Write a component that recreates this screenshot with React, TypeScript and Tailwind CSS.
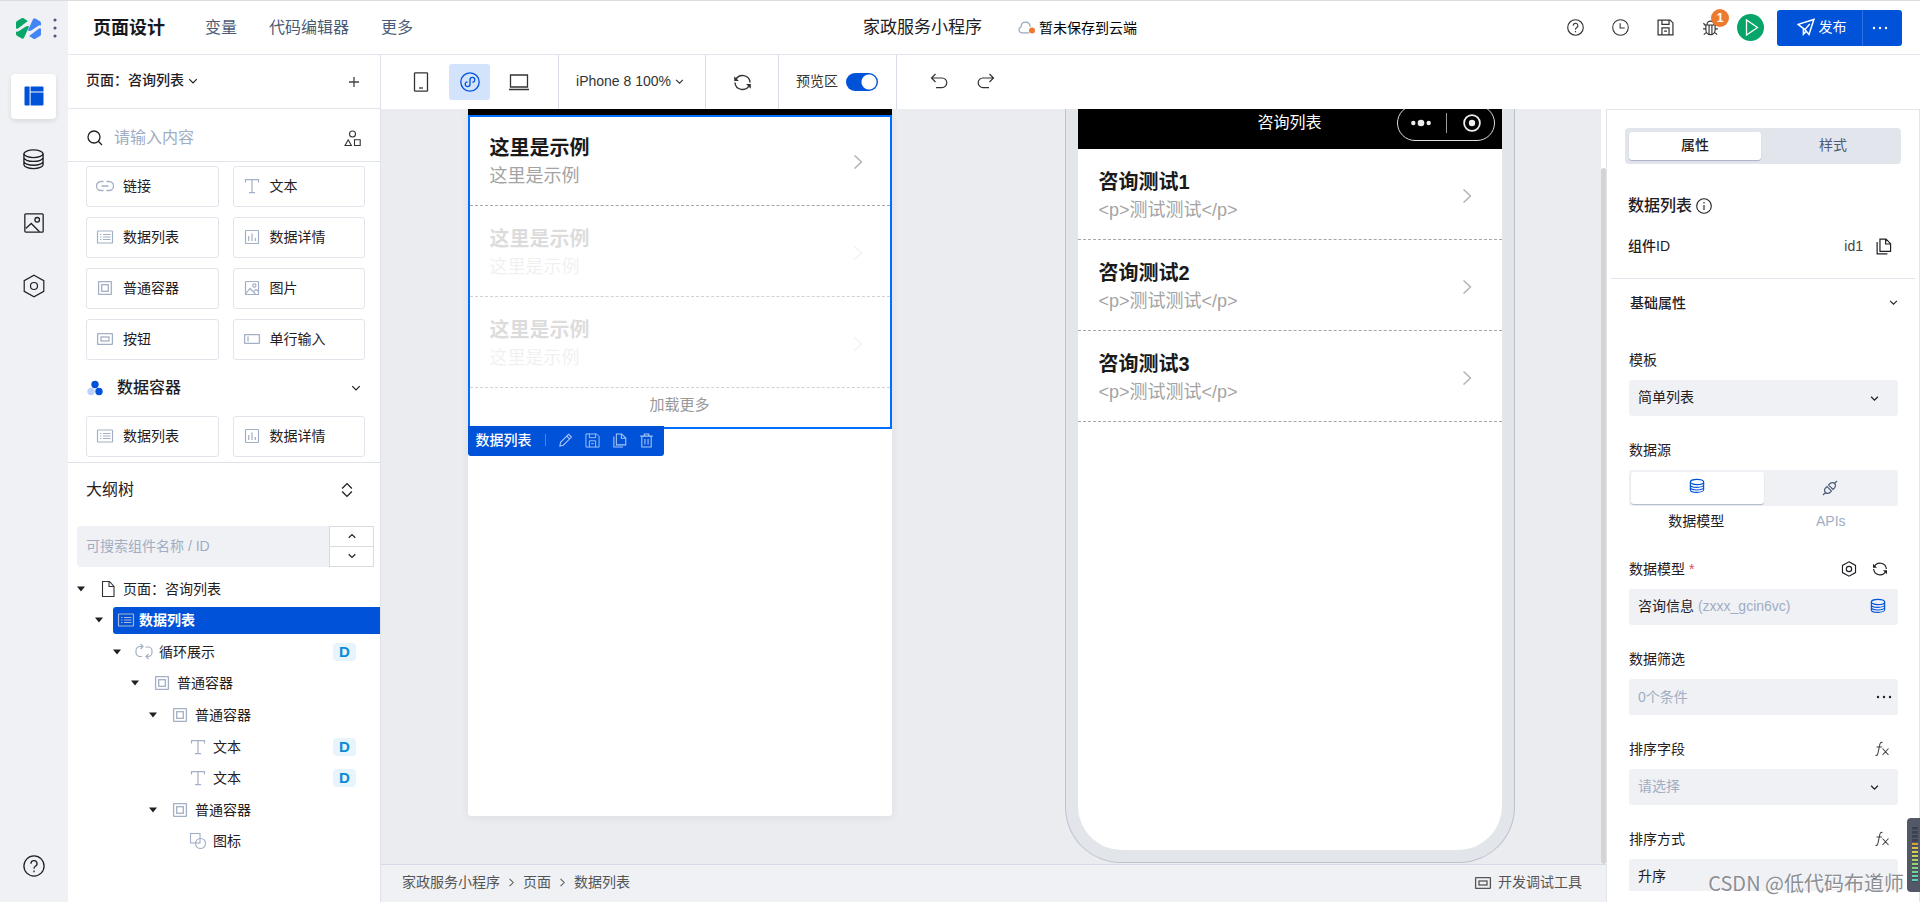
import React, { useState } from "react";

type IconProps = { className?: string };

function Svg({
  className,
  box = 24,
  sw = 1.5,
  children,
}: IconProps & { box?: number; sw?: number; children: React.ReactNode }) {
  return (
    <svg
      viewBox={`0 0 ${box} ${box}`}
      className={className}
      fill="none"
      stroke="currentColor"
      strokeWidth={sw}
      aria-hidden="true"
    >
      {children}
    </svg>
  );
}

const Logo = () => (
  <svg viewBox="0 0 76 64" className="h-[21px] w-[25px]" aria-hidden="true">
    <path fill="#07a568" d="M0 14Q0 11 3 9L17 1Q20-1 23 1L36 9L6 32Q0 35 0 30Z" />
    <path fill="#07a568" d="M0 41Q4 43 10 39L30 26Q36 23 40 26L24 61Q20 65 16 62L3 54Q0 52 0 49Z" />
    <path fill="#4285f4" d="M76 50Q76 53 73 55L59 63Q56 65 53 63L40 55L70 32Q76 29 76 34Z" />
    <path fill="#4285f4" d="M76 23Q72 21 66 25L46 38Q40 41 36 38L52 3Q56-1 60 2L73 10Q76 12 76 15Z" />
  </svg>
);

const LayoutIcon = ({ className }: IconProps) => (
  <svg viewBox="0 0 20 20" className={className} fill="#0052d9" aria-hidden="true">
    <path d="M1.500.5H5.600v19H1.500A1 1 0 0 1 .5 18.500v-17a1 1 0 0 1 1-1ZM6.600.5h11.900a1 1 0 0 1 1 1v4H6.600ZM6.600 6.500h12.900v12a1 1 0 0 1-1 1H6.600Z" />
  </svg>
);
const Database = ({ className, sw = 1.4 }: IconProps & { sw?: number }) => (
  <Svg className={className} sw={sw}>
    <ellipse cx="12" cy="6" rx="10" ry="4" />
    <path d="M2 6v11.500c0 2.200 4.400 4 10 4s10-1.800 10-4V6M2 10c0 2.200 4.400 4 10 4s10-1.800 10-4M2 14c0 2.200 4.400 4 10 4s10-1.800 10-4" />
  </Svg>
);
const Picture = ({ className, sw = 1.4 }: IconProps & { sw?: number }) => (
  <Svg className={className} sw={sw}>
    <rect x="2" y="2" width="20" height="20" rx="1" />
    <circle cx="15.500" cy="8.500" r="2.500" />
    <path d="M3 18 9 12.500l9 9" />
  </Svg>
);
const Hexagon = ({ className, sw = 1.4, r = 3.2 }: IconProps & { sw?: number; r?: number }) => (
  <Svg className={className} sw={sw}>
    <path d="M12 1.200 21.800 6.600v10.800L12 22.800 2.200 17.400V6.600Z" />
    <circle cx="12" cy="12" r={r} />
  </Svg>
);
const Help = ({ className, sw = 1.4 }: IconProps & { sw?: number }) => (
  <Svg className={className} sw={sw}>
    <circle cx="12" cy="12" r="11" />
    <path d="M8.700 9.600A3.300 3.300 0 1 1 13.500 12.300Q12 13.200 12 15M12 16.800v2" />
  </Svg>
);
const Clock = ({ className }: IconProps) => (
  <Svg className={className}>
    <circle cx="12" cy="12" r="11" />
    <path d="M11.500 6v6.800h6.500" />
  </Svg>
);
const Save = ({ className, sw = 1.5 }: IconProps & { sw?: number }) => (
  <Svg className={className} sw={sw}>
    <path d="M1.500 1.500h17l4 4v17h-21ZM7 1.500v6h10v-6M7 22.500v-10h10v10M10 17h4" />
  </Svg>
);
const Bug = ({ className }: IconProps) => (
  <Svg className={className} sw={1.6}>
    <path d="M7 8a5 5 0 0 1 10 0M5.500 8.500h13v7a6.500 6.500 0 0 1-13 0ZM10 9v12.500M14 9v12.500M5.500 9.500 2 6M18.500 9.500 22 6M5.500 14H1.500M18.500 14h4M6.500 18.500 2.500 22M17.500 18.500l4 3.500" />
  </Svg>
);
const Send = ({ className }: IconProps) => (
  <Svg className={className} sw={2}>
    <path d="M1.500 8.500 22.500 2 16 22 10.500 15.500ZM10.500 15.500 17 8M8.500 14v7.500l4-4" />
  </Svg>
);
const Chevron = ({ className, d = "M2 5l6 6 6-6", sw = 2 }: IconProps & { d?: string; sw?: number }) => (
  <Svg className={className} box={16} sw={sw}>
    <path d={d} />
  </Svg>
);
const Dots = ({ className }: IconProps) => (
  <svg viewBox="0 0 16 16" className={className} fill="currentColor" aria-hidden="true">
    <circle cx="2" cy="8" r="1.200" />
    <circle cx="8" cy="8" r="1.200" />
    <circle cx="14" cy="8" r="1.200" />
  </svg>
);
const Refresh = ({ className }: IconProps) => (
  <Svg className={className} sw={1.8}>
    <path d="M3.500 8.500A9.500 9.500 0 0 1 21.500 12M20.500 15.500A9.500 9.500 0 0 1 2.500 12" />
    <path fill="currentColor" stroke="none" d="M1.500 4v6h6ZM22.500 20v-6h-6Z" />
  </Svg>
);
const Copy = ({ className, sw = 1.7 }: IconProps & { sw?: number }) => (
  <Svg className={className} sw={sw}>
    <path d="M7 1.500h8.500L22 8v11H7ZM15 1.500V8.500h7M3 5.500v17h14.500" />
  </Svg>
);
const Pencil = ({ className }: IconProps) => (
  <Svg className={className} sw={1.7}>
    <path d="M3 21l1-6L17 2l4.500 4.500-13 13ZM14 5l4.500 4.500" />
  </Svg>
);
const Trash = ({ className }: IconProps) => (
  <Svg className={className} sw={1.7}>
    <path d="M2 5h20M8.500 5V1.500h7V5M4.500 5v17.500h15V5M9.500 9.500v9M14.500 9.500v9" />
  </Svg>
);
const LinkIcon = ({ className }: IconProps) => (
  <Svg className={className} box={18} sw={1.3}>
    <path d="M7.500 4.500H5a4.500 4.500 0 0 0 0 9h2.500M10.500 4.500H13a4.500 4.500 0 0 1 0 9h-2.500M5.500 9h7" />
  </Svg>
);
const TextIcon = ({ className }: IconProps) => (
  <Svg className={className} box={18} sw={1.2}>
    <path d="M2.500 5.500V2.700h13v2.800M9 2.700v12.800M6 15.600h6" />
  </Svg>
);
const ListIcon = ({ className }: IconProps) => (
  <Svg className={className} box={18} sw={1.2}>
    <rect x="1.500" y="3" width="15" height="12" rx=".6" />
    <path d="M4 6.500h1.500M7 6.500h7.500M4 9h1.500M7 9h7.500M4 11.500h1.500M7 11.500h7.500" />
  </Svg>
);
const DetailIcon = ({ className }: IconProps) => (
  <Svg className={className} box={18} sw={1.2}>
    <rect x="2.500" y="2.500" width="13" height="13" rx=".6" />
    <path d="M5.700 8v5M9 5.500V13M12.300 10v3" />
  </Svg>
);
const BoxIcon = ({ className }: IconProps) => (
  <Svg className={className} box={18} sw={1.3}>
    <rect x="2.600" y="2.600" width="12.800" height="12.800" rx=".4" />
    <rect x="5.700" y="5.700" width="6.600" height="6.600" />
  </Svg>
);
const PicIcon = ({ className }: IconProps) => (
  <Svg className={className} box={18} sw={1.2}>
    <rect x="2.500" y="2.500" width="13" height="13" rx=".6" />
    <circle cx="11.300" cy="6.500" r="1.600" />
    <path d="M3 14.500l4-5 5.500 5.500M11 12l2-1.500 2.500 2" />
  </Svg>
);
const ButtonIcon = ({ className }: IconProps) => (
  <Svg className={className} box={18} sw={1.3}>
    <rect x="1.600" y="3.600" width="14.800" height="10.800" rx=".5" />
    <rect x="5" y="7" width="8" height="4" />
  </Svg>
);
const InputIcon = ({ className }: IconProps) => (
  <Svg className={className} box={18} sw={1.3}>
    <rect x="1.600" y="4.600" width="14.800" height="8.800" rx=".5" />
    <path d="M5 6.500v5" />
  </Svg>
);
const PageIcon = ({ className }: IconProps) => (
  <Svg className={className} box={18} sw={1.1}>
    <path d="M3.500 1.500h7l4.500 5v10H3.500ZM10 1.500v5h5" />
  </Svg>
);
const LoopIcon = ({ className }: IconProps) => (
  <Svg className={className} box={18} sw={1.2}>
    <path d="M7.500 3.500H5a4 4 0 0 0-4 4v2a4 4 0 0 0 4 4h2M5.500 1l2.500 2.500L5.500 6M10.500 4H13a4 4 0 0 1 4 4v1.500a4 4 0 0 1-4 4h-2M13.500 11 11 13.500 13.500 16" />
  </Svg>
);
const ShapesIcon = ({ className }: IconProps) => (
  <Svg className={className} box={18} sw={1.1}>
    <rect x="1.500" y="1.500" width="9.500" height="9.500" />
    <circle cx="11.500" cy="11.500" r="5" />
  </Svg>
);
const MiniProgram = ({ className }: IconProps) => (
  <Svg className={className} box={20} sw={1.3}>
    <circle cx="10" cy="10" r="9.200" />
    <path d="M12.400 10.200A2.400 2.400 0 1 0 10 7.800V12.200A2.400 2.400 0 1 1 7.600 9.800" />
  </Svg>
);
const Fx = () => (
  <svg viewBox="0 0 16 16" className="h-4 w-4" fill="none" stroke="#444" strokeWidth="1.100" aria-hidden="true">
    <path d="M8.500 1.500C6.500.8 6 2.500 5.600 4.500L4 12c-.4 2-1 2.700-2.500 2.300M2.500 6h5.500M8.500 7.500l6 6.500M14.500 7.500l-6 6.500" />
  </svg>
);

const components = [
  { label: "链接", Icon: LinkIcon },
  { label: "文本", Icon: TextIcon },
  { label: "数据列表", Icon: ListIcon },
  { label: "数据详情", Icon: DetailIcon },
  { label: "普通容器", Icon: BoxIcon },
  { label: "图片", Icon: PicIcon },
  { label: "按钮", Icon: ButtonIcon },
  { label: "单行输入", Icon: InputIcon },
];

function ComponentGrid({ items }: { items: typeof components }) {
  return (
    <div className="grid grid-cols-2 gap-x-3.5 gap-y-2.5 pr-[15px] pl-[18px]">
      {items.map(({ label, Icon }) => (
        <button
          key={label}
          className="flex h-[41px] items-center gap-[9px] rounded-[3px] border border-[#e1e4ea] pb-0.5 pl-[9px] text-sm text-[#1f2024]"
        >
          <Icon className="h-[18px] w-[18px] text-[#a3afc4]" />
          {label}
        </button>
      ))}
    </div>
  );
}

const indents = ["pl-[9px]", "pl-[27px]", "pl-[45px]", "pl-[63px]", "pl-[81px]", "pl-[99px]"];
const tree = [
  { level: 0, label: "页面：咨询列表", Icon: PageIcon, open: true, tint: "text-[#333]" },
  { level: 1, label: "数据列表", Icon: ListIcon, open: true, selected: true },
  { level: 2, label: "循环展示", Icon: LoopIcon, open: true, bound: true },
  { level: 3, label: "普通容器", Icon: BoxIcon, open: true },
  { level: 4, label: "普通容器", Icon: BoxIcon, open: true },
  { level: 5, label: "文本", Icon: TextIcon, bound: true },
  { level: 5, label: "文本", Icon: TextIcon, bound: true },
  { level: 4, label: "普通容器", Icon: BoxIcon, open: true },
  { level: 5, label: "图标", Icon: ShapesIcon },
];

function Rail() {
  return (
    <nav className="flex w-[68px] shrink-0 flex-col bg-[#f0f1f5] text-[#1f2024]">
      <div className="flex h-[54px] w-full items-center gap-3 pl-4">
        <Logo />
        <svg viewBox="0 0 4 20" className="h-5 w-1" fill="#4b5b76" aria-hidden="true">
          <circle cx="2" cy="2" r="1.600" />
          <circle cx="2" cy="10" r="1.600" />
          <circle cx="2" cy="18" r="1.600" />
        </svg>
      </div>
      <div className="mt-[19px] ml-[11px] flex flex-col gap-[18px]">
        <button aria-label="布局" className="grid h-[45px] w-[45px] place-items-center rounded bg-white pb-0.5 shadow-[0_2px_5px_rgba(0,0,0,0.1)]">
          <LayoutIcon className="h-5 w-5" />
        </button>
        <button aria-label="数据" className="grid h-[45px] w-[45px] place-items-center">
          <Database className="h-[23px] w-[23px]" />
        </button>
        <button aria-label="素材" className="grid h-[45px] w-[45px] place-items-center">
          <Picture className="h-[22px] w-[22px]" />
        </button>
        <button aria-label="设置" className="grid h-[45px] w-[45px] place-items-center">
          <Hexagon className="h-6 w-6" sw={1.2} r={3.5} />
        </button>
      </div>
      <button aria-label="帮助" className="mt-auto mb-3.5 ml-[11px] grid h-[45px] w-[45px] place-items-center">
        <Help className="h-[22px] w-[22px]" />
      </button>
    </nav>
  );
}

function Header() {
  return (
    <header className="grid h-[54px] shrink-0 grid-cols-[1fr_auto_1fr] items-center border-b border-[#e4e6ed] bg-white">
      <div className="flex items-center gap-8 pl-[25px]">
        <h1 className="mr-2 text-lg font-bold text-[#16181d]">页面设计</h1>
        <a href="#variables" className="text-base text-[#4b5b76]">变量</a>
        <a href="#editor" className="text-base text-[#4b5b76]">代码编辑器</a>
        <a href="#more" className="text-base text-[#4b5b76]">更多</a>
      </div>
      <div className="flex items-center gap-9 pl-3">
        <span className="text-[17px] text-[#1f2024]">家政服务小程序</span>
        <span className="flex items-center gap-1 text-sm text-black">
          <svg viewBox="0 0 17 13" className="h-[13px] w-[17px]" fill="none" aria-hidden="true">
            <path
              d="M11 11.800H3.800A3 3 0 0 1 3 6c.2-3 2-4.900 4.500-4.900S12 3 12.300 6"
              stroke="#9aa8c2"
              strokeWidth="1.200"
            />
            <circle cx="14" cy="9.500" r="3" fill="#ed7b2f" />
          </svg>
          暂未保存到云端
        </span>
      </div>
      <div className="flex items-center justify-end pr-[18px] text-[#333]">
        <div className="flex items-center gap-7">
          <button aria-label="帮助"><Help className="h-[17px] w-[17px]" sw={1.6} /></button>
          <button aria-label="历史"><Clock className="h-[17px] w-[17px]" /></button>
          <button aria-label="保存"><Save className="h-[17px] w-[17px]" sw={1.7} /></button>
          <button aria-label="调试" className="relative">
            <Bug className="h-[17px] w-[17px]" />
            <span className="absolute -top-2.5 left-[9px] grid h-[18px] w-[18px] place-items-center rounded-full bg-[#ed7b2f] text-xs font-bold text-white">
              1
            </span>
          </button>
        </div>
        <button aria-label="运行" className="ml-[18px] grid h-[27px] w-[27px] place-items-center rounded-full bg-[#07a568] text-white">
          <svg viewBox="0 0 27 27" className="h-[27px] w-[27px]" fill="none" stroke="currentColor" strokeWidth="1.300" aria-hidden="true">
            <path d="M9.500 6v15l11-7.500Z" />
          </svg>
        </button>
        <div className="ml-[13px] flex h-9 overflow-hidden rounded-[3px] bg-[#0052d9] text-sm text-white">
          <button className="flex w-[86px] items-center justify-center gap-1 border-r border-[#2e70e0] pb-0.5 pl-1">
            <Send className="h-[18px] w-[18px]" />
            发布
          </button>
          <button aria-label="更多操作" className="grid w-[39px] place-items-center pr-1.5">
            <Dots className="h-4 w-4" />
          </button>
        </div>
      </div>
    </header>
  );
}

function LeftPanel() {
  return (
    <aside className="flex w-[313px] shrink-0 flex-col border-r border-[#dfe2e9] bg-white text-[#1f2024]">
      <div className="flex h-[54px] shrink-0 items-center justify-between border-b border-[#e4e6ed] pr-[18px] pl-[18px]">
        <button className="flex items-center gap-1 pb-1 text-sm font-medium">
          页面：咨询列表
          <Chevron className="mt-0.5 h-2.5 w-2.5" />
        </button>
        <button aria-label="新增页面">
          <Svg className="h-4 w-4 text-[#444]" box={16} sw={1.3}>
            <path d="M8 3v10M3 8h10" />
          </Svg>
        </button>
      </div>
      <div className="flex h-[53px] shrink-0 items-center gap-[11px] border-b border-[#e1e4ea] pt-1.5 pr-[19px] pl-[19px]">
        <Svg className="h-4 w-4" box={16} sw={1.3}>
          <circle cx="7" cy="7" r="6" />
          <path d="M11.300 11.300 15 15" />
        </Svg>
        <input
          aria-label="搜索组件"
          placeholder="请输入内容"
          className="min-w-0 flex-1 bg-transparent text-base outline-none placeholder:text-[#a0adc3]"
        />
        <button aria-label="组件分类">
          <Svg className="h-[17px] w-[17px] text-[#333]" box={17} sw={1.1}>
            <circle cx="8.500" cy="4" r="3" />
            <path d="M1 15.500 4.200 9.800 7.400 15.500ZM10.500 9.800h5.700v5.700h-5.700Z" />
          </Svg>
        </button>
      </div>
      <div className="shrink-0 border-b border-[#dfe2e9] pt-1 pb-[5px]">
        <ComponentGrid items={components} />
        <button className="flex h-14 w-full items-center pr-[19px] pl-[19px] text-base font-medium">
          <svg viewBox="0 0 16 16" className="mr-3.5 h-4 w-4" aria-hidden="true">
            <circle cx="8" cy="4.500" r="3.700" fill="#0052d9" />
            <circle cx="4" cy="11.500" r="3.700" fill="#bbd3fb" />
            <circle cx="12" cy="11.500" r="3.700" fill="#0052d9" />
          </svg>
          数据容器
          <Chevron className="ml-auto h-2.5 w-2.5" />
        </button>
        <ComponentGrid items={components.slice(2, 4)} />
      </div>
      <div className="flex h-[63px] shrink-0 items-center justify-between pr-[27px] pb-2.5 pl-[18px]">
        <h2 className="text-base">大纲树</h2>
        <button aria-label="展开或收起">
          <Svg className="h-4 w-3" box={16} sw={1.8}>
            <path d="M1.500 6 8-.5 14.500 6M1.500 10 8 16.500 14.500 10" />
          </Svg>
        </button>
      </div>
      <div className="flex h-[41px] shrink-0 pr-[6px] pl-[9px]">
        <input
          aria-label="搜索大纲树"
          placeholder="可搜索组件名称 / ID"
          className="min-w-0 flex-1 rounded-l bg-[#f0f1f5] px-[9px] pb-0.5 text-sm outline-none placeholder:text-[#a0adc3]"
        />
        <div className="grid w-[45px] grid-rows-2 border border-[#d9dbe0]">
          <button aria-label="上一个" className="grid place-items-center border-b border-[#d9dbe0]">
            <Chevron className="h-2 w-2" d="M1.500 11.500 8 5l6.500 6.500" sw={2.4} />
          </button>
          <button aria-label="下一个" className="grid place-items-center">
            <Chevron className="h-2 w-2" d="M1.500 4.500 8 11l6.500-6.500" sw={2.4} />
          </button>
        </div>
      </div>
      <ul className="mt-1.5 grid h-[284px] shrink-0 auto-rows-fr">
        {tree.map(({ level, label, Icon, open, selected, bound, tint }, i) => (
          <li key={i} className={`flex items-center text-sm ${indents[level]}`}>
            <span className="flex w-[18px] shrink-0">
              {open && (
                <svg viewBox="0 0 8 6" className="h-1.5 w-2" fill="#1f2024" aria-hidden="true">
                  <path d="M0 .5h8L4 5.500Z" />
                </svg>
              )}
            </span>
            <button
              className={`flex h-[27px] min-w-0 flex-1 items-center rounded-l-[3px] pl-1 ${
                selected ? "gap-1 bg-[#0052d9] font-bold text-white" : "gap-1.5"
              }`}
            >
              <Icon className={`h-[18px] w-[18px] ${selected ? "text-[#a9b8d3]" : tint ?? "text-[#a3afc4]"}`} />
              {label}
            </button>
            {bound && (
              <span className="mr-6 grid h-[18px] w-[23px] place-items-center rounded bg-[#e7f4fb] text-[15px] leading-[18px] font-bold text-[#0a8bd6]">
                D
              </span>
            )}
          </li>
        ))}
      </ul>
    </aside>
  );
}

function Toolbar() {
  const [preview, setPreview] = useState(true);
  return (
    <div className="flex h-[54px] shrink-0 bg-white text-sm text-[#333]">
      <div className="flex items-center gap-2 border-r border-[#d8dce6] pr-[19px] pl-[19px]">
        <button aria-label="手机" className="grid h-9 w-[41px] place-items-center">
          <Svg className="h-5 w-5" box={20} sw={1.3}>
            <rect x="3.500" y=".8" width="13" height="18.400" rx=".8" />
            <path d="M8 16h4" />
          </Svg>
        </button>
        <button aria-label="小程序" className="grid h-9 w-[41px] place-items-center rounded-[3px] bg-[#d4e3fc] text-[#0052d9]">
          <MiniProgram className="h-5 w-5" />
        </button>
        <button aria-label="电脑" className="grid h-9 w-[41px] place-items-center">
          <Svg className="h-5 w-5" box={20} sw={1.3}>
            <path d="M1.500 3h17v12h-17ZM0 17.500h20" />
          </Svg>
        </button>
      </div>
      <button className="flex w-[147px] items-center justify-center gap-1 border-r border-[#d8dce6] pr-1 pb-0.5 text-sm">
        iPhone 8 100%
        <Chevron className="h-[9px] w-[9px]" />
      </button>
      <button aria-label="刷新" className="grid w-[73px] place-items-center border-r border-[#d8dce6]">
        <Refresh className="h-[19px] w-[19px]" />
      </button>
      <label className="flex w-[118px] items-center gap-2 border-r border-[#d8dce6] pl-[17px]">
        <span className="pb-0.5">预览区</span>
        <input
          type="checkbox"
          checked={preview}
          onChange={(e) => setPreview(e.target.checked)}
          className="h-[18px] w-8 appearance-none rounded-full bg-[#b5bfd1] bg-[radial-gradient(circle_at_9px_9px,#fff_7px,transparent_8px)] checked:bg-[#0052d9] checked:bg-[radial-gradient(circle_at_23px_9px,#fff_7px,transparent_8px)]"
        />
      </label>
      <div className="flex items-center gap-[29px] pl-[33px]">
        <button aria-label="撤销">
          <Svg className="h-[18px] w-[18px]" box={18} sw={1.2}>
            <path d="M5.500 1 1.500 5l4 4M1.500 5H12a4.800 4.800 0 0 1 0 9.600H6" />
          </Svg>
        </button>
        <button aria-label="重做">
          <Svg className="h-[18px] w-[18px]" box={18} sw={1.2}>
            <path d="M12.500 1l4 4-4 4M16.500 5H6a4.800 4.800 0 0 0 0 9.600h6" />
          </Svg>
        </button>
      </div>
    </div>
  );
}

function ListItem({ title, text, faded, pad }: { title: string; text: string; faded?: boolean; pad: string }) {
  return (
    <li className={`border-b border-dashed ${faded ? "border-[#d2d2d2]" : "border-[#a6a6a6]"}`}>
      <div className={`flex h-[90px] items-center justify-between pt-1 ${pad} ${faded ? "opacity-15" : ""}`}>
        <div>
          <p className="text-xl leading-7 font-bold text-[#1a1a1a]">{title}</p>
          <p className="text-lg leading-7 text-[#a3a3a3]">{text}</p>
        </div>
        <Chevron className="h-3.5 w-3.5 text-[#b2b2b2]" d="M4 .5 12 8l-8 7.500" sw={1.6} />
      </div>
    </li>
  );
}

function DesignPhone() {
  return (
    <div className="mb-12 w-[424px] shrink-0 self-stretch rounded-b-[3px] bg-white shadow-[0_2px_8px_rgba(0,0,0,0.06)]">
      <div className="h-1.5 bg-black" />
      <div className="relative border-2 border-[#006eff]">
        <ul className="-mt-0.5">
          <ListItem title="这里是示例" text="这里是示例" pad="pr-[25px] pl-5" />
          <ListItem title="这里是示例" text="这里是示例" faded pad="pr-[25px] pl-5" />
          <ListItem title="这里是示例" text="这里是示例" faded pad="pr-[25px] pl-5" />
        </ul>
        <button className="block h-[39px] w-full pb-1 text-[15px] text-[#999]">加载更多</button>
        <div className="absolute top-full -left-0.5 -mt-px flex h-[30px] w-[196px] items-center rounded-b-[3px] bg-[#0052d9] pb-0.5 pl-2 text-white">
          <span className="text-sm font-medium">数据列表</span>
          <span className="mr-3 ml-[13px] h-3 w-px bg-white/30" />
          <span className="flex gap-3 text-[#a9c6f7]">
            <button aria-label="编辑"><Pencil className="h-[15px] w-[15px]" /></button>
            <button aria-label="保存"><Save className="h-[15px] w-[15px]" /></button>
            <button aria-label="复制"><Copy className="h-[15px] w-[15px]" /></button>
            <button aria-label="删除"><Trash className="h-[15px] w-[15px]" /></button>
          </span>
        </div>
      </div>
    </div>
  );
}

function PreviewPhone() {
  return (
    <div className="mb-px flex w-[450px] shrink-0 flex-col self-stretch rounded-b-[56px] border border-t-0 border-[#bcc3cf] bg-[#e2e6eb] px-3 pb-3">
      <div className="relative h-10 shrink-0 overflow-hidden bg-black text-white">
        <h2 className="text-center text-base leading-7">咨询列表</h2>
        <div className="absolute right-[7px] bottom-2 flex h-[36px] w-[98px] items-center justify-between rounded-full border border-[#ddd] px-[13px]">
          <svg viewBox="0 0 20 8" className="h-2 w-5" fill="#eee" aria-hidden="true">
            <circle cx="2.300" cy="4" r="2.200" />
            <circle cx="10" cy="4" r="3.300" />
            <circle cx="17.700" cy="4" r="2.200" />
          </svg>
          <span className="h-5 w-px bg-[#999]" />
          <svg viewBox="0 0 18 18" className="h-[18px] w-[18px]" aria-hidden="true">
            <circle cx="9" cy="9" r="7.900" fill="none" stroke="#eee" strokeWidth="1.800" />
            <circle cx="9" cy="9" r="3.200" fill="#eee" />
          </svg>
        </div>
      </div>
      <ul className="flex-1 rounded-b-[44px] bg-white">
        <ListItem title="咨询测试1" text="<p>测试测试</p>" pad="pr-7 pl-[21px]" />
        <ListItem title="咨询测试2" text="<p>测试测试</p>" pad="pr-7 pl-[21px]" />
        <ListItem title="咨询测试3" text="<p>测试测试</p>" pad="pr-7 pl-[21px]" />
      </ul>
    </div>
  );
}

function Footer() {
  const sep = <Chevron className="mt-0.5 h-[9px] w-[9px]" d="M4.500 1.500 11 8l-6.500 6.500" sw={1.8} />;
  return (
    <footer className="flex h-[38px] shrink-0 items-center justify-between border-t border-[#d5dae6] bg-[#f0f1f5] pr-6 pb-1 pl-[21px] text-sm text-[#555]">
      <nav className="flex items-center gap-[7px]" aria-label="路径">
        <a href="#app">家政服务小程序</a>
        {sep}
        <a href="#page">页面</a>
        {sep}
        <a href="#list">数据列表</a>
      </nav>
      <button className="flex items-center gap-1.5">
        <ButtonIcon className="mt-0.5 h-[18px] w-[18px]" />
        开发调试工具
      </button>
    </footer>
  );
}

function Field({
  id,
  label,
  extra,
  children,
}: {
  id: string;
  label: React.ReactNode;
  extra?: React.ReactNode;
  children: React.ReactNode;
}) {
  return (
    <div className="mb-6">
      <div className="mb-2.5 flex h-5 items-center justify-between pr-2">
        <label htmlFor={id} className="text-sm text-[#1f2024]">
          {label}
        </label>
        {extra}
      </div>
      {children}
    </div>
  );
}

function SelectBox({ id, value, muted }: { id: string; value: string; muted?: boolean }) {
  return (
    <div className="relative">
      <select
        id={id}
        className={`block h-9 w-full appearance-none rounded-[3px] bg-[#f0f1f5] pr-10 pb-0.5 pl-[9px] text-sm outline-none ${
          muted ? "text-[#a0adc3]" : "text-[#1f2024]"
        }`}
      >
        <option>{value}</option>
      </select>
      <Chevron className="pointer-events-none absolute top-3.5 right-[19px] h-[9px] w-[9px] text-[#1f2024]" sw={2.2} />
    </div>
  );
}

function RightPanel() {
  return (
    <aside className="w-[314px] shrink-0 overflow-hidden border border-b-0 border-[#e1e4ea] bg-white pb-[11px] text-sm text-[#1f2024]">
      <div className="h-full overflow-hidden">
        <div className="mx-[18px] mt-[18px] grid h-9 grid-cols-2 gap-1.5 rounded bg-[#e2e6ec] py-1 pr-0.5 pl-1" role="tablist">
          <button role="tab" aria-selected="true" className="rounded-[3px] bg-white pb-0.5 font-medium shadow-[0_1px_1px_rgba(60,80,120,0.35)]">
            属性
          </button>
          <button role="tab" aria-selected="false" className="pb-0.5 text-[#4b5b76]">
            样式
          </button>
        </div>
        <div className="mt-[30px] flex h-6 items-center gap-1 pl-[21px]">
          <h2 className="text-base font-medium">数据列表</h2>
          <Svg className="h-4 w-4" box={16} sw={1.1}>
            <circle cx="8" cy="8" r="7.300" />
            <path d="M8 7v5M8 4v1.500" />
          </Svg>
        </div>
        <div className="mt-[18px] flex h-5 items-center pr-[27px] pl-[21px]">
          <span className="flex-1 font-medium">组件ID</span>
          <span className="mr-3 text-[#444]">id1</span>
          <button aria-label="复制组件ID">
            <Copy className="h-[17px] w-[17px]" />
          </button>
        </div>
        <div className="mx-1 mt-[22px] border-b border-[#e1e4ea]" />
        <button className="flex h-[47px] w-full items-center justify-between pr-[21px] pl-[23px] text-left font-medium">
          基础属性
          <Chevron className="h-[9px] w-[9px]" />
        </button>
        <div className="mt-6 pr-[21px] pl-[22px]">
          <Field id="template" label="模板">
            <SelectBox id="template" value="简单列表" />
          </Field>
          <Field id="source-model" label="数据源">
            <div className="grid h-9 grid-cols-2 rounded-[3px] bg-[#f0f1f5] p-0.5">
              <button id="source-model" aria-label="数据模型" className="grid place-items-center rounded-[3px] bg-white pb-1 text-[#0052d9] shadow-[0_1px_1px_rgba(60,80,120,0.35)]">
                <Database className="h-4 w-4" sw={1.7} />
              </button>
              <button aria-label="APIs" className="grid place-items-center text-[#4b5b76]">
                <Svg className="h-4 w-4" box={16} sw={1.1}>
                  <path d="M1 15l2.500-2.500M15 1l-2.500 2.500M3.500 12.500c-1.500-1.500-1-3.500.5-5L5 6.500l4.500 4.500-1 1c-1.500 1.500-3.500 2-5 .5ZM12.500 3.500c1.500 1.500 1 3.500-.5 5l-1 1L6.500 5l1-1c1.500-1.500 3.500-2 5-.5Z" />
                </Svg>
              </button>
            </div>
            <div className="mt-[5px] grid grid-cols-2 text-center leading-5">
              <span>数据模型</span>
              <span className="text-[#a0adc3]">APIs</span>
            </div>
          </Field>
          <div className="h-1" />
          <Field
            id="model"
            label={
              <>
                数据模型 <span className="text-[#e34d59]">*</span>
              </>
            }
            extra={
              <span className="flex gap-[15px] pr-0.5">
                <button aria-label="模型设置"><Hexagon className="h-4 w-4" sw={1.7} r={4} /></button>
                <button aria-label="刷新模型"><Refresh className="h-4 w-4" /></button>
              </span>
            }
          >
            <button id="model" className="flex h-9 w-full items-center rounded-[3px] bg-[#f0f1f5] pr-3 pb-0.5 pl-[9px]">
              咨询信息&nbsp;<span className="flex-1 text-left text-[#a0adc3]">(zxxx_gcin6vc)</span>
              <Database className="h-4 w-4 text-[#0052d9]" sw={1.7} />
            </button>
          </Field>
          <Field id="filter" label="数据筛选">
            <button id="filter" className="flex h-9 w-full items-center justify-between rounded-[3px] bg-[#f0f1f5] pr-1.5 pl-[9px] text-[#a0adc3]">
              0个条件
              <Dots className="h-4 w-4 text-[#1f2024]" />
            </button>
          </Field>
          <Field id="sort-field" label="排序字段" extra={<button aria-label="排序字段表达式"><Fx /></button>}>
            <SelectBox id="sort-field" value="请选择" muted />
          </Field>
          <Field id="sort-order" label="排序方式" extra={<button aria-label="排序方式表达式"><Fx /></button>}>
            <SelectBox id="sort-order" value="升序" />
          </Field>
        </div>
      </div>
    </aside>
  );
}

const meter = [
  "bg-[#3c4150]", "bg-[#3c4150]", "bg-[#3c4150]", "bg-[#3c4150]",
  "bg-[#d9a33c]", "bg-[#dcc04a]", "bg-[#d6d04e]", "bg-[#c3d456]", "bg-[#a9d45f]",
  "bg-[#92d56c]", "bg-[#7fd67c]", "bg-[#6cd68e]", "bg-[#5fd6a4]", "bg-[#56d5b4]",
];

export default function App() {
  return (
    <div className="relative flex h-screen overflow-hidden border-t border-[#dcdcdc] bg-white font-['Liberation_Sans','Noto_Sans_CJK_SC',sans-serif]">
      <Rail />
      <div className="flex min-w-0 flex-1 flex-col">
        <Header />
        <div className="flex min-h-0 flex-1">
          <LeftPanel />
          <div className="flex min-w-0 flex-1 flex-col">
            <Toolbar />
            <div className="flex min-h-0 flex-1">
              <main className="flex min-w-0 flex-1 flex-col">
                <div className="flex min-h-0 flex-1 bg-[#ebecf0]">
                  <div className="flex min-w-0 flex-1 justify-around overflow-hidden">
                    <DesignPhone />
                    <PreviewPhone />
                  </div>
                  <div className="w-[5px] bg-white pt-[59px]">
                    <div className="h-full rounded-full bg-[#d4d4d4]" />
                  </div>
                </div>
                <Footer />
              </main>
              <RightPanel />
            </div>
          </div>
        </div>
      </div>
      <div className="pointer-events-none absolute right-4 bottom-1 font-['Noto_Sans_CJK_SC',sans-serif] text-[20px] leading-[30px] text-[#8d8f94] [text-shadow:1px_1px_1px_#fff]">
        CSDN @低代码布道师
      </div>
      <div className="absolute right-0 bottom-2.5 flex h-[74px] w-[13px] flex-col items-end gap-px rounded-l bg-[#535868] pt-[9px] pr-0.5">
        {meter.map((c, i) => (
          <span key={i} className={`h-[3px] w-1.5 border-b border-[#444958] ${c}`} />
        ))}
      </div>
    </div>
  );
}
